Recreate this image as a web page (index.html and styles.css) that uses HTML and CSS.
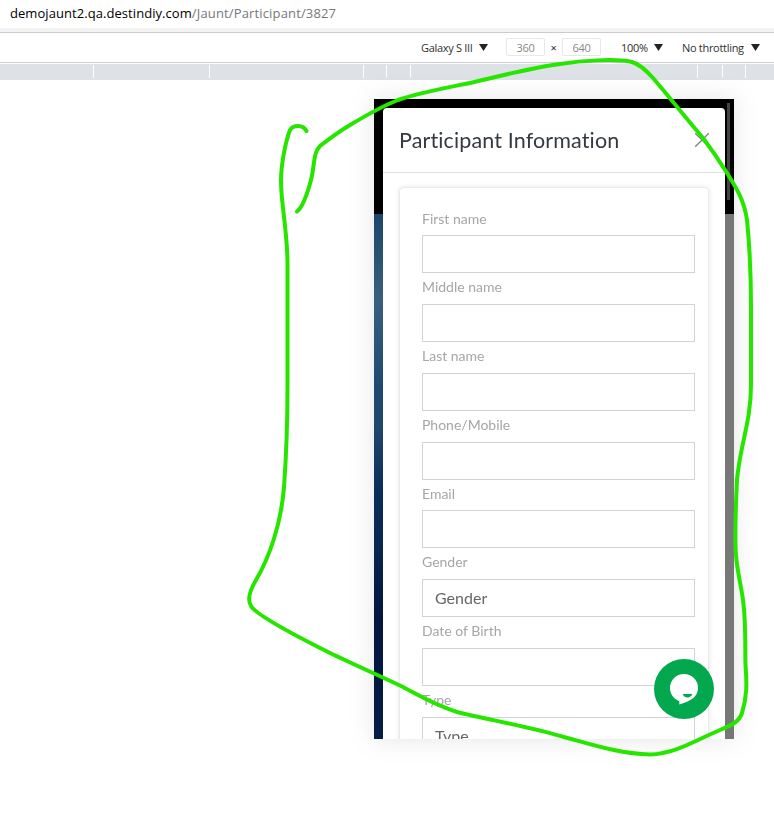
FILE: index.html
```html
<!DOCTYPE html>
<html lang="en">
<head>
<meta charset="utf-8">
<title>Participant Information</title>
<link rel="stylesheet" href="styles.css">
</head>
<body>
<div class="address"><span class="host">demojaunt2.qa.destindiy.com</span><span class="path">/Jaunt/Participant/3827</span></div>
<div class="device-bar">
  <span class="device">Galaxy S III</span><i class="arrow"></i>
  <span class="size">360</span><span class="times">×</span><span class="size">640</span>
  <span class="scale">100%</span><i class="arrow"></i>
  <span class="throttle">No throttling</span><i class="arrow"></i>
</div>
<div class="ruler"><i></i><i></i><i></i><i></i><i></i><i></i><i></i><i></i></div>
<main class="stage">
  <div class="phone">
    <div class="scrollbar"></div>
    <section class="modal">
      <header class="modal-head">
        <h1>Participant Information</h1>
        <svg class="close" viewBox="0 0 16 16"><path d="M1.2 1.2 14.8 14.8M14.8 1.2 1.2 14.8"/></svg>
      </header>
      <form class="card">
        <label>First name</label><div class="field"></div>
        <label>Middle name</label><div class="field"></div>
        <label>Last name</label><div class="field"></div>
        <label>Phone/Mobile</label><div class="field"></div>
        <label>Email</label><div class="field"></div>
        <label>Gender</label><div class="field">Gender</div>
        <label>Date of Birth</label><div class="field"></div>
        <label>Type</label><div class="field">Type</div>
      </form>
    </section>
    <svg class="chat" viewBox="0 0 60 60">
      <circle cx="30" cy="30" r="30" fill="#03a84e"/>
      <path fill="#fff" d="M30 15a14 14 0 0 1 14 14c0 8-6 13-18.700 16.500v-3.300A14 14 0 0 1 30 15z"/>
      <path fill="#03a84e" d="M28.700 35h9.600c-.8 2.400-2.400 3.400-4.800 3.400s-4-1-4.800-3.400z"/>
    </svg>
  </div>
</main>
<svg class="marker" viewBox="0 0 774 825">
  <path d="M306.500 131C303 124 293 125 290 130C285 143 281 166 281 181C281 204 287 228 287.500 262L287.500 385C287.500 430 286 460 284 487C281 525 269 558 256 580C249 592 247 600 251 606C256 615 300 638 330 653C355 665 380 676 401 686C420 696 434 705 457 712C490 720 530 727 564 737C590 744 620 754 650 754.500C675 754 698 739 720 730C732 725 739 722 742 713C747 697 747 684 745.500 665C745 645 746 622 743 600C740 578 735.500 566 735.500 545C735 520 736 500 737 480C740 445 751 422 751 385L751 307C751 270 749 240 747 220C744 199 735 186 727 173C717 157 712 150 703 138C687 119 670 98 653 78C645 69 639 64 632 62C615 58 580 61 560 64C530 68 500 76 470 83C440 89 418 93 398 100C380 107 365 116 350 125C340 131 329 139 320 146C313 153 315 164 311 180C307 195 303 207 297 211.500"/>
</svg>
</body>
</html>
```
FILE: styles.css
```css
* { box-sizing: border-box; }
body {
  margin: 0;
  width: 774px;
  height: 825px;
  overflow: hidden;
  background: #fff;
  font-family: Lato, sans-serif;
  font-variant-ligatures: none;
}
.address {
  height: 32px;
  padding-left: 10px;
  border-bottom: 4px solid #f2f2f2;
  font: 13px/27px "Open Sans", sans-serif;
  white-space: nowrap;
  color: #000;
}
.host { letter-spacing: 0.060px; }
.path { color: #777; letter-spacing: 0.150px; }
.device-bar {
  display: flex;
  align-items: center;
  height: 31px;
  padding-left: 421px;
  border-top: 1px solid #ccc;
  border-bottom: 1px solid #cacdd1;
  font: 11px/18px "Open Sans", sans-serif;
  letter-spacing: -0.300px;
  color: #303030;
  white-space: nowrap;
}
.device { width: 58px; }
.arrow {
  width: 9px;
  height: 7px;
  background: #222;
  clip-path: polygon(0 0, 100% 0, 50% 100%);
}
.size {
  width: 39px;
  height: 18px;
  margin-top: -1px;
  border: 1px solid #e8e8e8;
  border-radius: 2px;
  line-height: 17px;
  text-align: center;
  color: #888;
}
.arrow + .size { margin-left: 18px; }
.times { width: 17px; text-align: center; color: #224; }
.scale { width: 33px; margin-left: 20px; }
.throttle { width: 69px; margin-left: 19px; }
.ruler {
  display: grid;
  grid-template-columns: 93px 116px 154px 23px 24px 287px 25px 23px;
  height: 16px;
  margin-top: 1px;
  padding: 1px 0 2px;
  background: #dee1e6;
}
.ruler i { border-right: 1px solid #fff; margin-right: -1px; }
.stage {
  padding: 19px 0 0 374px;
  filter: drop-shadow(0 0 12px rgba(0, 0, 0, .1));
}
.phone {
  position: relative;
  width: 360px;
  height: 640px;
  padding: 9px 9px 0;
  overflow: hidden;
  background:
    linear-gradient(#000, #000) 0 0 / 360px 115px no-repeat,
    linear-gradient(#777, #777) 351px 115px / 9px 525px no-repeat,
    linear-gradient(#1d456d 115px, #28506f 150px, #385f7e 200px, #1e4970 290px, #20486c 325px, #0b2d5a 390px, #08264e 450px, #02153f 520px, #061d45 640px);
}
.scrollbar {
  position: absolute;
  top: 4px;
  right: 4px;
  width: 3px;
  height: 97px;
  background: #444;
}
.modal {
  height: 700px;
  background: #fff;
  border-radius: 4px;
}
.modal-head {
  display: flex;
  justify-content: space-between;
  align-items: center;
  height: 65px;
  padding: 0 15px 0 16px;
  border-bottom: 1px solid #dee2e6;
}
h1 {
  margin: 0;
  font-size: 21.500px;
  font-weight: 400;
  letter-spacing: 0.130px;
  color: #343a40;
}
.close { width: 16px; height: 16px; fill: none; stroke: #808080; stroke-width: 1.300; }
.card {
  width: 310px;
  height: 640px;
  margin: 14px 16px;
  padding: 16.550px 13px 0 22px;
  border: 1px solid #e9e9e9;
  border-radius: 4px;
  box-shadow: 0 0 5px rgba(0, 0, 0, .1);
}
label {
  display: block;
  height: 30.750px;
  font-size: 14px;
  line-height: 28px;
  color: #a6a6a6;
}
.field {
  height: 38px;
  padding-left: 12px;
  border: 1px solid #ced4da;
  font-size: 16px;
  line-height: 35px;
  color: #666;
}
.chat { position: absolute; left: 280px; top: 560px; width: 60px; height: 60px; }
.marker {
  position: absolute;
  inset: 0;
  width: 774px;
  height: 825px;
  fill: none;
  stroke: #26e600;
  stroke-width: 4;
  stroke-linecap: round;
  stroke-linejoin: round;
}
```
